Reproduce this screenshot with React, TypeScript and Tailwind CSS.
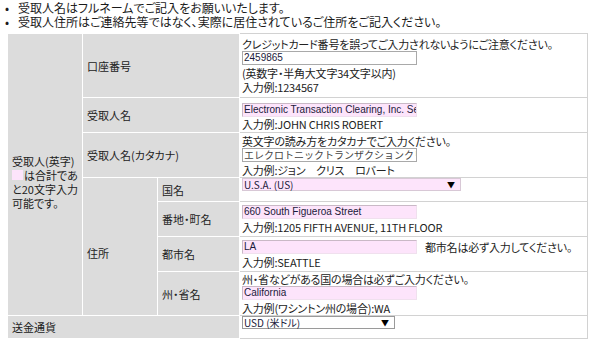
import React from "react"

const jp = "font-['Noto_Sans_CJK_JP',sans-serif] [font-feature-settings:'palt']"
const latin = "font-['Liberation_Sans',Arial,sans-serif]"

const labelCell = "bg-[#dcdcdc] border border-white align-middle px-[4px] text-[11px] leading-[14px] text-[#222] whitespace-nowrap"
const valueCell = "bg-white border border-[#d2d2d2] align-top px-[2px] py-0 text-[11px] leading-[14px] tracking-[-0.2px] text-[#222] whitespace-nowrap"

function TextInput({ value, pink = true, jpText = false }: { value: string; pink?: boolean; jpText?: boolean }) {
  return (
    <div
      className={
        "w-[175px] h-[14px] overflow-hidden whitespace-nowrap px-[1px] text-[10px] leading-[12px] tracking-normal border " +
        (pink ? "bg-[#fde4fb] border-t-[#c9b9c6] border-l-[#c9b9c6] border-r-[#f0e0ee] border-b-[#f0e0ee] " : "bg-white border-[#a9a9a9] ") +
        (jpText
          ? "font-['Noto_Sans_CJK_JP',sans-serif] [font-feature-settings:normal] text-[10.5px] text-[#444]"
          : latin + " text-[#1a1a3a]")
      }
    >
      {value}
    </div>
  )
}

function SelectBox({ value, width, pink }: { value: string; width: string; pink?: boolean }) {
  return (
    <div
      className={
        "flex items-center justify-between h-[13px] pl-[1px] pr-[5px] border tracking-normal " +
        width +
        (pink ? " bg-[#fde4fb] border-[#d8c8d6]" : " bg-white border-[#9a9a9a]")
      }
    >
      <span className="text-[10px] leading-[11px] text-[#1a1a3a] whitespace-nowrap">{value}</span>
      <span className="text-[8px] leading-[8px] text-black">▼</span>
    </div>
  )
}

export default function App() {
  return (
    <div className={"bg-white w-[608px] h-[350px] text-[#1a1a1a] " + jp}>
      <ul className="pt-[1px] pl-[5px] text-[12px] leading-[14px]">
        <li className="flex">
          <span className="w-[13px]">•</span>
          <span>受取人名はフルネームでご記入をお願いいたします。</span>
        </li>
        <li className="flex">
          <span className="w-[13px]">•</span>
          <span>受取人住所はご連絡先等ではなく、実際に居住されているご住所をご記入ください。</span>
        </li>
      </ul>

      <table className="ml-[7px] mt-[4px] w-[581px] border-collapse table-fixed">
        <colgroup>
          <col className="w-[75px]" />
          <col className="w-[75px]" />
          <col className="w-[82px]" />
          <col />
        </colgroup>
        <tbody>
          <tr className="h-[64px]">
            <td rowSpan={7} className={labelCell + " px-[2px] leading-[12px] pt-[14px]"}>
              <div>受取人(英字)</div>
              <div className="flex items-center">
                <span className="inline-block w-[11px] h-[10px] bg-[#fde4fb] mr-[1px]"></span>
                <span>は合計であ</span>
              </div>
              <div>と20文字入力</div>
              <div>可能です。</div>
            </td>
            <td colSpan={2} className={labelCell}>口座番号</td>
            <td className={valueCell + " pt-[3px]"}>
              <div>クレジットカード番号を誤ってご入力されないようにご注意ください。</div>
              <TextInput value="2459865" pink={false} />
              <div className="mt-[1px]">(英数字・半角大文字34文字以内)</div>
              <div>入力例:1234567</div>
            </td>
          </tr>
          <tr className="h-[35px]">
            <td colSpan={2} className={labelCell}>受取人名</td>
            <td className={valueCell + " pt-[5px]"}>
              <TextInput value="Electronic Transaction Clearing, Inc. Se" />
              <div>入力例:JOHN CHRIS ROBERT</div>
            </td>
          </tr>
          <tr className="h-[45px]">
            <td colSpan={2} className={labelCell}>受取人名(カタカナ)</td>
            <td className={valueCell + " pt-[1px]"}>
              <div>英文字の読み方をカタカナでご入力ください。</div>
              <TextInput value="エレクロトニックトランザクションクリアリング" pink={false} jpText />
              <div className="mt-[1px]">入力例:ジョン　クリス　ロバート</div>
            </td>
          </tr>
          <tr className="h-[24px]">
            <td rowSpan={4} className={labelCell + " pt-[12px]"}>住所</td>
            <td className={labelCell}>国名</td>
            <td className={valueCell + " align-middle"}>
              <SelectBox value="U.S.A. (US)" width="w-[219px]" pink />
            </td>
          </tr>
          <tr className="h-[35px]">
            <td className={labelCell}>番地・町名</td>
            <td className={valueCell + " pt-[3px]"}>
              <TextInput value="660 South Figueroa Street" />
              <div className="mt-[1px]">入力例:1205 FIFTH AVENUE, 11TH FLOOR</div>
            </td>
          </tr>
          <tr className="h-[35px]">
            <td className={labelCell}>都市名</td>
            <td className={valueCell + " pt-[3px]"}>
              <div className="flex items-center gap-[8px]">
                <TextInput value="LA" />
                <span>都市名は必ず入力してください。</span>
              </div>
              <div className="mt-[1px]">入力例:SEATTLE</div>
            </td>
          </tr>
          <tr className="h-[44px]">
            <td className={labelCell}>州・省名</td>
            <td className={valueCell}>
              <div>州・省などがある国の場合は必ずご入力ください。</div>
              <TextInput value="California" />
              <div className="mt-[1px]">入力例(ワシントン州の場合):WA</div>
            </td>
          </tr>
          <tr className="h-[23px]">
            <td colSpan={3} className={labelCell}>送金通貨</td>
            <td className={valueCell + " align-middle"}>
              <SelectBox value="USD (米ドル)" width="w-[153px]" />
            </td>
          </tr>
        </tbody>
      </table>
    </div>
  )
}
